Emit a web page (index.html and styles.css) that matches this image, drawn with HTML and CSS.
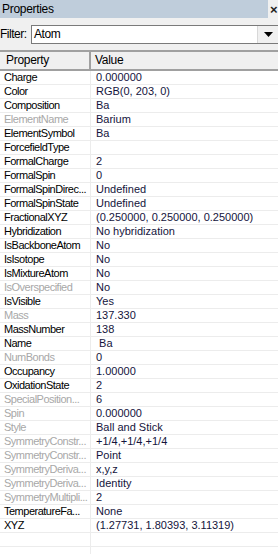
FILE: index.html
```html
<!DOCTYPE html>
<html lang="en">
<head>
  <meta charset="UTF-8" />
  <title>Properties</title>
  <link rel="stylesheet" href="styles.css">
</head>
<body>
  <div class="panel">
    <div class="titlebar">
      <span class="title">Properties</span>
      <span class="close">×</span>
    </div>

    <div class="filter">
      <span class="filter-label">Filter:</span>
      <div class="combo">
        <span class="combo-text">Atom</span>
        <span class="combo-btn">
          <svg width="9" height="5" viewBox="0 0 9 5"><path d="M0 0h9L4.5 5z" fill="#000"/></svg>
        </span>
      </div>
    </div>

    <div class="grid">
      <div class="head">Property</div><div class="head">Value</div>

      <div class="name">Charge</div><div class="val">0.000000</div>
      <div class="name">Color</div><div class="val">RGB(0, 203, 0)</div>
      <div class="name">Composition</div><div class="val">Ba</div>
      <div class="name off">ElementName</div><div class="val">Barium</div>
      <div class="name">ElementSymbol</div><div class="val">Ba</div>
      <div class="name">ForcefieldType</div><div class="val"></div>
      <div class="name">FormalCharge</div><div class="val">2</div>
      <div class="name">FormalSpin</div><div class="val">0</div>
      <div class="name">FormalSpinDirec...</div><div class="val">Undefined</div>
      <div class="name">FormalSpinState</div><div class="val">Undefined</div>
      <div class="name">FractionalXYZ</div><div class="val">(0.250000, 0.250000, 0.250000)</div>
      <div class="name">Hybridization</div><div class="val">No hybridization</div>
      <div class="name">IsBackboneAtom</div><div class="val">No</div>
      <div class="name">IsIsotope</div><div class="val">No</div>
      <div class="name">IsMixtureAtom</div><div class="val">No</div>
      <div class="name off">IsOverspecified</div><div class="val">No</div>
      <div class="name">IsVisible</div><div class="val">Yes</div>
      <div class="name off">Mass</div><div class="val">137.330</div>
      <div class="name">MassNumber</div><div class="val">138</div>
      <div class="name">Name</div><div class="val">&nbsp;Ba</div>
      <div class="name off">NumBonds</div><div class="val">0</div>
      <div class="name">Occupancy</div><div class="val">1.00000</div>
      <div class="name">OxidationState</div><div class="val">2</div>
      <div class="name off">SpecialPosition...</div><div class="val">6</div>
      <div class="name off">Spin</div><div class="val">0.000000</div>
      <div class="name off">Style</div><div class="val">Ball and Stick</div>
      <div class="name off">SymmetryConstr...</div><div class="val">+1/4,+1/4,+1/4</div>
      <div class="name off">SymmetryConstr...</div><div class="val">Point</div>
      <div class="name off">SymmetryDeriva...</div><div class="val">x,y,z</div>
      <div class="name off">SymmetryDeriva...</div><div class="val">Identity</div>
      <div class="name off">SymmetryMultipli...</div><div class="val">2</div>
      <div class="name">TemperatureFa...</div><div class="val">None</div>
      <div class="name">XYZ</div><div class="val">(1.27731, 1.80393, 3.11319)</div>
      <div class="name"></div><div class="val"></div>
      <div class="name"></div><div class="val"></div>
    </div>
  </div>
</body>
</html>
```

FILE: styles.css
```css
body {
  margin: 0;
  background: #fff;
  font-family: "Liberation Sans", Arial, sans-serif;
  font-size: 11px;
  overflow: hidden;
}

.panel {
  width: 278px;
  height: 554px;
  background: #f0f0f0;
  overflow: hidden;
}

.titlebar {
  display: flex;
  align-items: center;
  height: 18px;
}

.title {
  flex: 1;
  height: 18px;
  line-height: 18px;
  background: #bfcddb;
  padding-left: 2px;
  font-size: 12px;
  letter-spacing: -0.3px;
  color: #000;
}

.close {
  width: 8px;
  margin-left: 2px;
  font-size: 13px;
  font-weight: bold;
  color: #222;
}

.filter {
  display: flex;
  align-items: center;
  height: 32px;
}

.filter-label {
  width: 31px;
  font-size: 12px;
  letter-spacing: -0.5px;
}

.combo {
  flex: 1;
  display: flex;
  height: 17px;
  background: #fff;
  border: 1px solid #7a7a7a;
  border-right: none;
}

.combo-text {
  flex: 1;
  line-height: 17px;
  padding-left: 2px;
  font-size: 12px;
  letter-spacing: -0.4px;
}

.combo-btn {
  width: 20px;
  display: flex;
  align-items: center;
  justify-content: center;
  background: #f0f0f0;
  border-left: 1px solid #d8d8d8;
}

.grid {
  display: grid;
  grid-template-columns: 91px 1fr;
  border-top: 2px solid #a0a0a0;
  background: #fff;
}

.head {
  height: 17px;
  line-height: 17px;
  background: #f0f0f0;
  border-bottom: 2px solid #a0a0a0;
  font-size: 12px;
  letter-spacing: -0.3px;
  padding-left: 6px;
}

.head:first-child {
  border-right: 2px solid #a0a0a0;
  width: 83px;
}

.head:nth-child(2) {
  padding-left: 4px;
}

.name, .val {
  height: 13px;
  line-height: 13px;
  border-bottom: 1px solid #ececec;
  white-space: nowrap;
  overflow: hidden;
}

.name {
  padding-left: 4px;
  border-right: 1px solid #ececec;
  letter-spacing: -0.5px;
  color: #000;
}

.name.off {
  color: #a8a8a8;
}

.val {
  padding-left: 5px;
  letter-spacing: 0;
  color: #14143c;
}
```
